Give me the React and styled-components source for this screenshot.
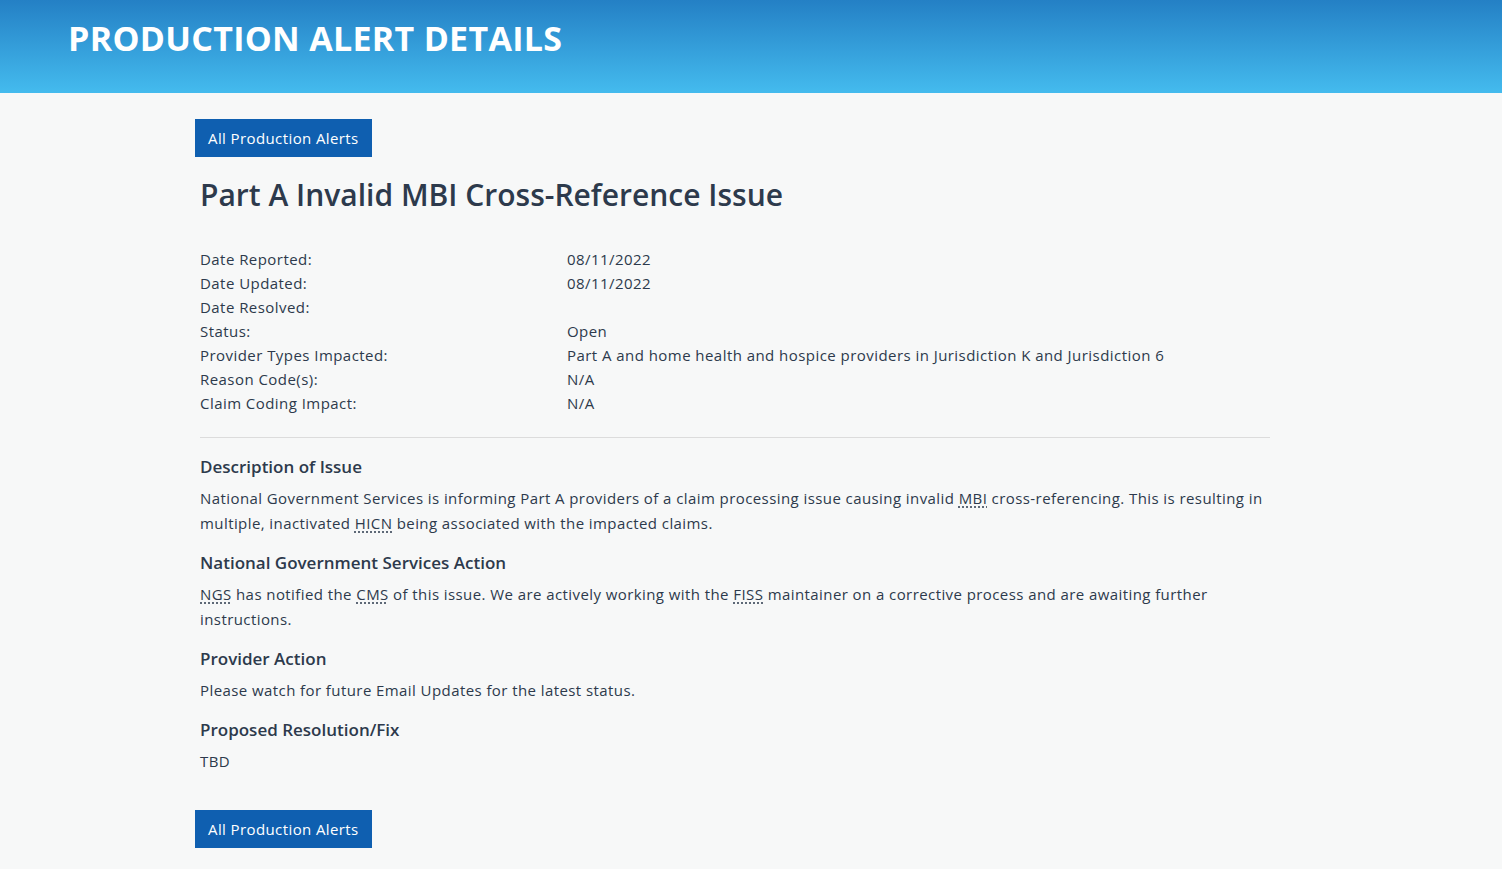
import { Fragment } from "react";
import styled, { createGlobalStyle } from "styled-components";

const GlobalStyle = createGlobalStyle`
  html, body {
    margin: 0;
    padding: 0;
    background: #f7f8f8;
    font-family: "Open Sans", "Liberation Sans", sans-serif;
    color: #2d3a4c;
  }
  * { box-sizing: border-box; }
`;

const Banner = styled.header`
  height: 93px;
  background: linear-gradient(180deg, #2480c5 0%, #44bbee 100%);
  display: flex;
  align-items: flex-start;
  padding: 17px 0 0 68px;
`;

const BannerTitle = styled.h1`
  margin: 0;
  color: #ffffff;
  font-size: 34px;
  font-weight: 700;
  letter-spacing: 0.3px;
  line-height: 42px;
`;

const Main = styled.main`
  width: 1080px;
  margin-left: 195px;
  padding: 26px 0 21px;
`;

const BackButton = styled.a`
  display: inline-flex;
  align-items: center;
  height: 38px;
  padding: 0 13px;
  background: #0f5fb0;
  color: #ffffff;
  font-size: 15px;
  font-weight: 500;
  letter-spacing: 0.4px;
  text-decoration: none;
  cursor: pointer;
`;

const Body = styled.div`
  padding: 0 5px;
`;

const Title = styled.h2`
  margin: 20px 0 34px;
  font-size: 30px;
  font-weight: 600;
  line-height: 36px;
  color: #2d3a4c;
`;

const Facts = styled.dl`
  display: grid;
  grid-template-columns: 367px 1fr;
  margin: 0;
  font-size: 15px;
  line-height: 24px;
  letter-spacing: 0.45px;
  padding-bottom: 22px;
  border-bottom: 1px solid #dcdcdc;
`;

const Term = styled.dt`
  margin: 0;
`;

const Value = styled.dd`
  margin: 0;
  min-height: 24px;
`;

const Section = styled.section`
  margin-top: ${(p) => p.$top || 15}px;
`;

const Heading = styled.h3`
  margin: 0 0 7px;
  font-size: 17px;
  font-weight: 600;
  line-height: 24px;
`;

const Text = styled.p`
  margin: 0;
  font-size: 15px;
  line-height: 25px;
  letter-spacing: 0.42px;
`;

const Abbr = styled.abbr`
  text-decoration: underline dotted;
  text-underline-offset: 3px;
  cursor: help;
`;

const Footer = styled.div`
  margin-top: 36px;
`;

const facts = [
  ["Date Reported:", "08/11/2022"],
  ["Date Updated:", "08/11/2022"],
  ["Date Resolved:", ""],
  ["Status:", "Open"],
  [
    "Provider Types Impacted:",
    "Part A and home health and hospice providers in Jurisdiction K and Jurisdiction 6",
  ],
  ["Reason Code(s):", "N/A"],
  ["Claim Coding Impact:", "N/A"],
];

export default function App() {
  return (
    <>
      <GlobalStyle />
      <Banner>
        <BannerTitle>PRODUCTION ALERT DETAILS</BannerTitle>
      </Banner>
      <Main>
        <BackButton>All Production Alerts</BackButton>
        <Body>
          <Title>Part A Invalid MBI Cross-Reference Issue</Title>
          <Facts>
            {facts.map(([k, v]) => (
              <Fragment key={k}>
                <Term>{k}</Term>
                <Value>{v}</Value>
              </Fragment>
            ))}
          </Facts>
          <Section $top={17}>
            <Heading>Description of Issue</Heading>
            <Text>
              National Government Services is informing Part A providers of a
              claim processing issue causing invalid{" "}
              <Abbr title="Medicare Beneficiary Identifier">MBI</Abbr>{" "}
              cross-referencing. This is resulting in multiple, inactivated{" "}
              <Abbr title="Health Insurance Claim Number">HICN</Abbr> being
              associated with the impacted claims.
            </Text>
          </Section>
          <Section>
            <Heading>National Government Services Action</Heading>
            <Text>
              <Abbr title="National Government Services">NGS</Abbr> has
              notified the{" "}
              <Abbr title="Centers for Medicare & Medicaid Services">CMS</Abbr>{" "}
              of this issue. We are actively working with the{" "}
              <Abbr title="Fiscal Intermediary Standard System">FISS</Abbr>{" "}
              maintainer on a corrective process and are awaiting further
              instructions.
            </Text>
          </Section>
          <Section>
            <Heading>Provider Action</Heading>
            <Text>Please watch for future Email Updates for the latest status.</Text>
          </Section>
          <Section>
            <Heading>Proposed Resolution/Fix</Heading>
            <Text>TBD</Text>
          </Section>
        </Body>
        <Footer>
          <BackButton>All Production Alerts</BackButton>
        </Footer>
      </Main>
    </>
  );
}
